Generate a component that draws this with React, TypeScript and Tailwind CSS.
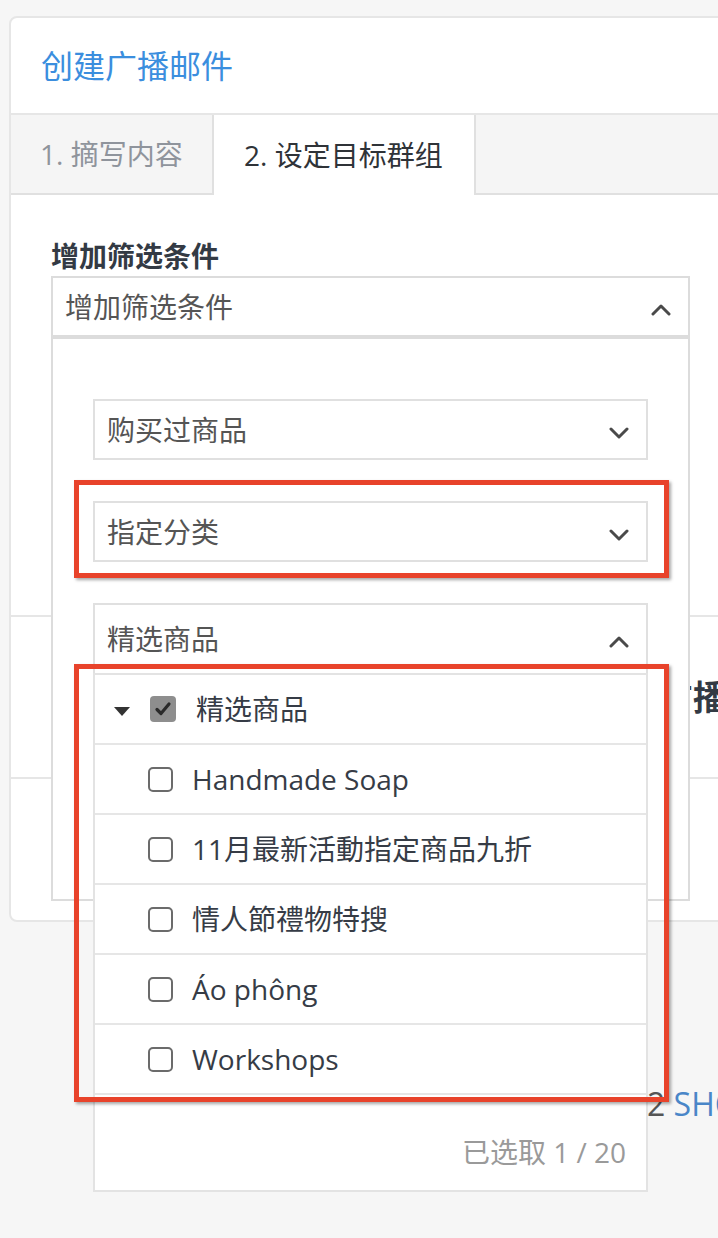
import React from "react";

const ChevronDown = () => (
  <svg width="20" height="12" viewBox="0 0 20 12" className="mt-[6px]">
    <polyline points="2,2 10,10 18,2" fill="none" stroke="#4a4a4a" strokeWidth="3" strokeLinecap="round" strokeLinejoin="round" />
  </svg>
);

const ChevronUp = () => (
  <svg width="20" height="12" viewBox="0 0 20 12" className="mt-[6px]">
    <polyline points="2,10 10,2 18,10" fill="none" stroke="#4a4a4a" strokeWidth="3" strokeLinecap="round" strokeLinejoin="round" />
  </svg>
);

const items = ["Handmade Soap", "11月最新活動指定商品九折", "情人節禮物特搜", "Áo phông", "Workshops"];

export default function App() {
  return (
    <div className="relative w-[718px] h-[1238px] overflow-hidden bg-[#f6f6f6] font-['Open_Sans','Noto_Sans_CJK_SC',sans-serif]">
      <div className="pt-[16px] pl-[9px]">
        <div className="w-[800px] bg-white border-2 border-[#e6e6e6] rounded-[8px]">
          {/* header */}
          <div className="h-[97px] border-b-2 border-[#e6e6e6] pl-[30px] flex items-center text-[32px] text-[#3b8ede]">
            创建广播邮件
          </div>
          {/* tabs */}
          <div className="flex h-[80px]">
            <div className="w-[203px] bg-[#f5f5f5] border-b-2 border-r-2 border-[#e0e0e0] pl-[29px] flex items-center text-[28px] text-[#8f949c]">
              1. 摘写内容
            </div>
            <div className="w-[260px] bg-white pl-[30px] flex items-center text-[28px] text-[#2f3338]">
              2. 设定目标群组
            </div>
            <div className="flex-1 bg-[#f5f5f5] border-l-2 border-b-2 border-[#e0e0e0]" />
          </div>
          {/* section 1 */}
          <div className="h-[422px] border-b-2 border-[#e6e6e6] px-[40px] pt-[47px]">
            <div className="text-[28px] leading-[28px] font-bold text-[#333a44] mb-[6px]">增加筛选条件</div>
            <div className="relative w-[639px]">
              <div className="h-[61px] border-2 border-[#dcdcdc] flex items-center justify-between pl-[12px] pr-[17px] text-[28px] text-[#555]">
                <span>增加筛选条件</span>
                <ChevronUp />
              </div>
              <div className="absolute top-full left-0 w-full h-[564px] border-2 border-[#dcdcdc] bg-white pt-[60px] px-[40px] flex flex-col gap-[41px]">
                <div className="h-[61px] border-2 border-[#e0e0e0] flex items-center justify-between pl-[12px] pr-[17px] text-[28px] text-[#555]">
                  <span>购买过商品</span>
                  <ChevronDown />
                </div>
                <div className="h-[61px] border-2 border-[#e0e0e0] flex items-center justify-between pl-[12px] pr-[17px] text-[28px] text-[#555]">
                  <span>指定分类</span>
                  <ChevronDown />
                </div>
                <div className="relative">
                  <div className="h-[70px] border-t-2 border-x-2 border-[#e0e0e0] flex items-center justify-between pl-[12px] pr-[17px] text-[28px] text-[#555]">
                    <span>精选商品</span>
                    <ChevronUp />
                  </div>
                  <div className="absolute top-full left-0 w-full border-2 border-[#e3e3e3] bg-white">
                    <div className="h-[70px] border-b-2 border-[#e6e6e6] flex items-center pl-[19px] gap-[20px] text-[28px] text-[#363c46]">
                      <svg width="16" height="9" viewBox="0 0 16 9" className="mt-[4px]">
                        <polygon points="0,0 16,0 8,9" fill="#333" />
                      </svg>
                      <div className="w-[26px] h-[26px] rounded-[4px] bg-[#8e8e8e] flex items-center justify-center">
                        <svg width="18" height="16" viewBox="0 0 18 16">
                          <polyline points="3,8.5 7,12.5 15,3" fill="none" stroke="#2a2a2a" strokeWidth="3.2" strokeLinecap="round" strokeLinejoin="round" />
                        </svg>
                      </div>
                      <span>精选商品</span>
                    </div>
                    {items.map((t) => (
                      <div key={t} className="h-[70px] border-b-2 border-[#e6e6e6] flex items-center pl-[53px] gap-[19px] text-[28px] text-[#363c46]">
                        <div className="w-[25px] h-[25px] shrink-0 rounded-[5px] border-2 border-[#6b6b6b] bg-white" />
                        <span className="whitespace-nowrap">{t}</span>
                      </div>
                    ))}
                    <div className="h-[95px] flex justify-end pr-[20px] pt-[43px]">
                      <span className="text-[28px] leading-[28px] text-[#9a9a9a]">已选取 1 / 20</span>
                    </div>
                  </div>
                </div>
              </div>
            </div>
          </div>
          {/* section 2 */}
          <div className="h-[162px] border-b-2 border-[#e6e6e6] flex items-center">
            <span className="pl-[648px] text-[34px] font-bold text-[#333a44] whitespace-nowrap">广播设定</span>
          </div>
          {/* section 3 */}
          <div className="h-[141px]" />
        </div>
        <div className="mt-[166px] pl-[638px] text-[32px] leading-[32px] whitespace-nowrap">
          <span className="text-[#555]">2 </span>
          <span className="text-[#4a86c8]">SHOPS</span>
        </div>
      </div>

      {/* annotation boxes */}
      <div className="absolute left-[74px] top-[480px] w-[595px] h-[98px] border-[5px] border-[#e8432b] shadow-[2px_2px_3px_rgba(0,0,0,0.35)]" />
      <div className="absolute left-[74px] top-[664px] w-[595px] h-[438px] border-[5px] border-[#e8432b] shadow-[2px_2px_3px_rgba(0,0,0,0.35)]" />
    </div>
  );
}
